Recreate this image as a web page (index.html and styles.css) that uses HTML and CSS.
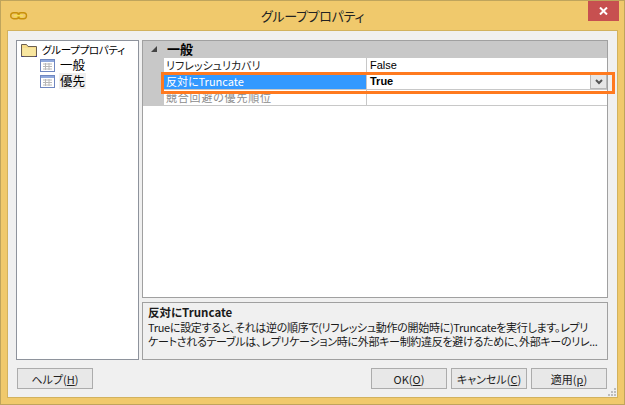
FILE: index.html
```html
<!DOCTYPE html>
<html lang="ja">
<head>
<meta charset="utf-8">
<title>グループプロパティ</title>
<link rel="stylesheet" href="styles.css">
</head>
<body>
<div class="window">
  <header class="titlebar">
    <svg class="link-icon" width="18" height="8" viewBox="0 0 18 8"><rect x="0.7" y="0.7" width="8.500" height="6" rx="3" fill="none" stroke="#c8900a" stroke-width="1.4"/><rect x="8" y="0.7" width="8.500" height="6" rx="3" fill="none" stroke="#c8900a" stroke-width="1.4"/><path d="M4 3.7h9" stroke="#f6e050" stroke-width="1.6"/></svg>
    <span class="title">グループプロパティ</span>
    <button class="close"><svg width="9" height="8" viewBox="0 0 9 8"><path d="M1 0.5l7 7M8 0.5l-7 7" stroke="#fff" stroke-width="2"/></svg></button>
  </header>
  <main class="content">
    <div class="panes">
      <nav class="tree">
        <div class="tree-root">
          <svg class="tree-icon" width="16" height="14" viewBox="0 0 16 14"><path d="M0.500 1.500h5l1.500 2h8.500v10h-15z" fill="#f6dc8c" stroke="#6b5f50"/><path d="M1.500 5h13v8h-13z" fill="#f8e6a0"/><path d="M0.500 13.500h2M14 13.500h2" stroke="#3c3c90"/></svg>
          <span>グループプロパティ</span>
        </div>
        <div class="tree-item">
          <svg class="tree-icon" width="15" height="13" viewBox="0 0 15 13"><rect x="0.500" y="0.500" width="14" height="12" fill="#fff" stroke="#6f87c0"/><rect x="1" y="1" width="13" height="2" fill="#8fa8dc"/><path d="M3 5h9M3 7.500h9M3 10h9M5.500 4v7M9 4v7" stroke="#b8b8b8"/></svg>
          <span class="tree-label">一般</span>
        </div>
        <div class="tree-item">
          <svg class="tree-icon" width="15" height="13" viewBox="0 0 15 13"><rect x="0.500" y="0.500" width="14" height="12" fill="#fff" stroke="#6f87c0"/><rect x="1" y="1" width="13" height="2" fill="#8fa8dc"/><path d="M3 5h9M3 7.500h9M3 10h9M5.500 4v7M9 4v7" stroke="#b8b8b8"/></svg>
          <span class="tree-label tree-current">優先</span>
        </div>
      </nav>
      <section class="right">
        <div class="grid">
          <div class="cat">
            <svg class="cat-arrow" width="6" height="6" viewBox="0 0 6 6"><path d="M6 0v6H0z" fill="#444"/></svg>
            <span>一般</span>
          </div>
          <div class="row">
            <div class="name">リフレッシュリカバリ</div>
            <div class="val">False</div>
          </div>
          <div class="row">
            <div class="name selected">反対にTruncate</div>
            <div class="val strong">True<span class="drop"><svg width="8" height="6" viewBox="0 0 8 6"><path d="M1 1l3 3 3-3" fill="none" stroke="#555" stroke-width="2"/></svg></span></div>
          </div>
          <div class="row">
            <div class="name disabled">競合回避の優先順位</div>
            <div class="val"></div>
          </div>
          <div class="highlight"></div>
        </div>
        <div class="desc">
          <div class="desc-title">反対にTruncate</div>
          <div class="desc-text">Trueに設定すると、それは逆の順序で(リフレッシュ動作の開始時に)Truncateを実行します。レプリ</div>
          <div class="desc-text">ケートされるテーブルは、レプリケーション時に外部キー制約違反を避けるために、外部キーのリレ...</div>
        </div>
      </section>
    </div>
    <footer class="buttons">
      <button class="btn">ヘルプ(<u>H</u>)</button>
      <div class="spacer"></div>
      <button class="btn">OK(<u>O</u>)</button>
      <button class="btn">キャンセル(<u>C</u>)</button>
      <button class="btn">適用(<u>p</u>)</button>
    </footer>
    <svg class="grip" width="9" height="9" viewBox="0 0 9 9"><path d="M6 0h2v2H6zM3 3h2v2H3zM6 3h2v2H6zM0 6h2v2H0zM3 6h2v2H3zM6 6h2v2H6z" fill="#bdbdbd"/></svg>
  </main>
</div>
</body>
</html>
```
FILE: styles.css
```css
* { box-sizing: border-box; }
html, body { margin: 0; padding: 0; }
body {
  width: 625px;
  height: 405px;
  overflow: hidden;
  font-family: "Noto Sans CJK JP", "Liberation Sans", sans-serif;
  font-feature-settings: "palt";
  font-size: 12px;
  color: #000;
}
.window {
  width: 625px;
  height: 405px;
  display: flex;
  flex-direction: column;
  background: #f0c96c;
  border: 1px solid #bfa45c;
  padding: 0 6px 6px;
}
.titlebar {
  height: 29px;
  flex: none;
  position: relative;
  display: flex;
  align-items: center;
  justify-content: center;
}
.link-icon { position: absolute; left: 3px; top: 11px; }
.title { font-size: 13px; letter-spacing: -0.3px; color: #222; line-height: 30px; }
.close {
  position: absolute;
  right: -1px;
  top: 0;
  width: 31px;
  height: 20px;
  border: 0;
  padding: 0;
  background: #c75050;
  display: flex;
  align-items: center;
  justify-content: center;
}
.content {
  flex: 1;
  position: relative;
  background: #f0f0f0;
  border: 1px solid #d2b25e;
  padding: 9px 9px 7px 8px;
  display: flex;
  flex-direction: column;
  min-height: 0;
}
.panes { display: flex; gap: 3px; height: 320px; flex: none; }
.tree {
  width: 123px;
  flex: none;
  background: #fff;
  border: 1px solid #8e939c;
  padding: 1px 4px;
  font-size: 10.500px;
  letter-spacing: -0.3px;
}
.tree-icon { flex: none; }
.tree-root { display: flex; align-items: center; gap: 5px; height: 15px; white-space: nowrap; }
.tree-root span { line-height: 15px; height: 15px; }
.tree-item { display: flex; align-items: center; gap: 4px; height: 16px; margin-left: 19px; font-size: 12.500px; letter-spacing: 0; }
.tree-label { line-height: 16px; height: 16px; padding: 0 1px; }
.tree-current { background: #f0f0f0; }
.right { flex: 1; display: flex; flex-direction: column; gap: 4px; min-width: 0; }
.grid {
  height: 258px;
  flex: none;
  position: relative;
  background: #fff;
  border: 1px solid #a0a0a0;
}
.cat {
  height: 17px;
  padding-bottom: 2px;
  background: #c8c8c8;
  display: flex;
  align-items: center;
  font-weight: bold;
  font-size: 13px;
}
.cat-arrow { margin: 0 0 0 8px; }
.cat span { margin-left: 10px; line-height: 15px; }
.row {
  display: flex;
  height: 16px;
  padding-left: 21px;
  background: linear-gradient(#c8c8c8, #c8c8c8) left / 21px 100% no-repeat;
  font-size: 11px;
}
.name {
  width: 203px;
  flex: none;
  padding-left: 2px;
  line-height: 15px;
  color: #222;
  border-bottom: 1px solid #c8c8c8;
  border-right: 1px solid #c8c8c8;
  white-space: nowrap;
  overflow: hidden;
}
.selected { background: #3399ff; color: #fff; }
.disabled { color: #8c8c8c; letter-spacing: 0.8px; }
.val {
  flex: 1;
  position: relative;
  padding-left: 3px;
  line-height: 15px;
  font-family: "Liberation Sans", sans-serif;
  font-size: 11px;
  border-bottom: 1px solid #c8c8c8;
}
.strong { font-weight: bold; }
.drop {
  position: absolute;
  right: 0;
  top: 0;
  width: 17px;
  height: 15px;
  background: #e6e6e6;
  border: 1px solid #b8b8b8;
  display: flex;
  align-items: center;
  justify-content: center;
}
.highlight {
  position: absolute;
  left: 18px;
  right: -8px;
  top: 31px;
  height: 22px;
  border: 3px solid #ff7a1f;
  pointer-events: none;
}
.desc {
  flex: 1;
  background: #f0f0f0;
  border: 1px solid #a0a0a0;
  padding: 1px 5px;
  font-size: 11px;
  line-height: 14px;
  color: #1a1a1a;
  min-width: 0;
}
.desc-title { font-weight: bold; font-size: 11.500px; line-height: 16px; }
.desc-text { height: 14px; white-space: nowrap; letter-spacing: -0.3px; }
.buttons { display: flex; gap: 4px; margin-top: 8px; height: 21px; flex: none; padding-left: 1px; padding-right: 1px; }
.spacer { flex: 1; }
.btn {
  width: 76px;
  height: 21px;
  padding: 0;
  background: #e8e8e8;
  border: 1px solid #acacac;
  font-family: "Noto Sans CJK JP", "Liberation Sans", sans-serif;
  font-feature-settings: "palt";
  font-size: 11px;
  line-height: 18px;
  color: #222;
}
.grip { position: absolute; right: 0; bottom: 0; }
```
